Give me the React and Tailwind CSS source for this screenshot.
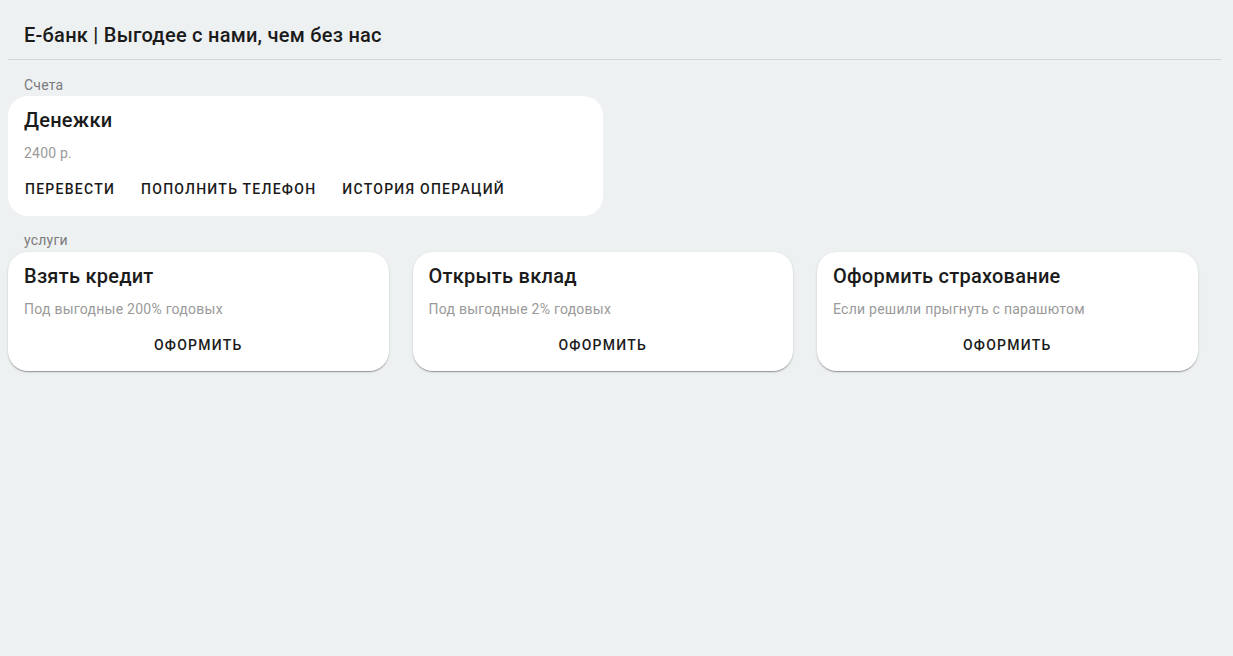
import React from "react";

const services = [
  { title: "Взять кредит", text: "Под выгодные 200% годовых" },
  { title: "Открыть вклад", text: "Под выгодные 2% годовых" },
  { title: "Оформить страхование", text: "Если решили прыгнуть с парашютом" },
];

function ActionButton({ children }) {
  return (
    <button className="px-2 py-1.5 text-sm leading-6 font-medium uppercase tracking-[1.25px] text-[#1b1b1b] rounded">
      {children}
    </button>
  );
}

export default function App() {
  return (
    <div
      className="min-h-screen bg-[#eef1f2] text-[#1b1b1b]"
      style={{ fontFamily: "Roboto, 'Liberation Sans', sans-serif" }}
    >
      <div className="ml-2 mr-3">
        {/* header */}
        <header className="pt-[19px] pb-2 px-4 border-b border-[#d3d6d8]">
          <h1 className="text-xl leading-8 font-medium tracking-[0.25px]">
            Е-банк | Выгодее с нами, чем без нас
          </h1>
        </header>

        {/* accounts */}
        <div className="mt-[15px] px-4 text-sm leading-5 text-[#7a7a7a] tracking-[0.2px]">Счета</div>
        <div className="mt-[1px] w-[595px] bg-white rounded-[20px]">
          <div className="px-4 pt-2">
            <h2 className="text-xl leading-8 font-medium tracking-[0.25px]">Денежки</h2>
            <p className="mt-[7px] text-sm leading-5 text-[#9a9a9a] tracking-[0.2px]">2400 р.</p>
          </div>
          <div className="flex gap-[10px] pl-[9px] pr-2 pt-2 pb-[9px]">
            <ActionButton>Перевести</ActionButton>
            <ActionButton>Пополнить телефон</ActionButton>
            <ActionButton>История операций</ActionButton>
          </div>
        </div>

        {/* services */}
        <div className="mt-[14px] px-4 text-sm leading-5 text-[#7a7a7a] tracking-[0.2px]">услуги</div>
        <div className="mt-[2px] flex gap-6">
          {services.map((s) => (
            <div
              key={s.title}
              className="w-[380.5px] bg-white rounded-[20px] shadow-[0_2px_1px_-1px_rgba(0,0,0,0.2),0_1px_1px_0_rgba(0,0,0,0.14),0_1px_3px_0_rgba(0,0,0,0.12)]"
            >
              <div className="px-4 pt-2">
                <h2 className="text-xl leading-8 font-medium tracking-[0.25px]">{s.title}</h2>
                <p className="mt-[7px] text-sm leading-5 text-[#9a9a9a] tracking-[0.25px]">{s.text}</p>
              </div>
              <div className="flex justify-center pt-2 px-2 pb-2">
                <ActionButton>Оформить</ActionButton>
              </div>
            </div>
          ))}
        </div>
      </div>
    </div>
  );
}
